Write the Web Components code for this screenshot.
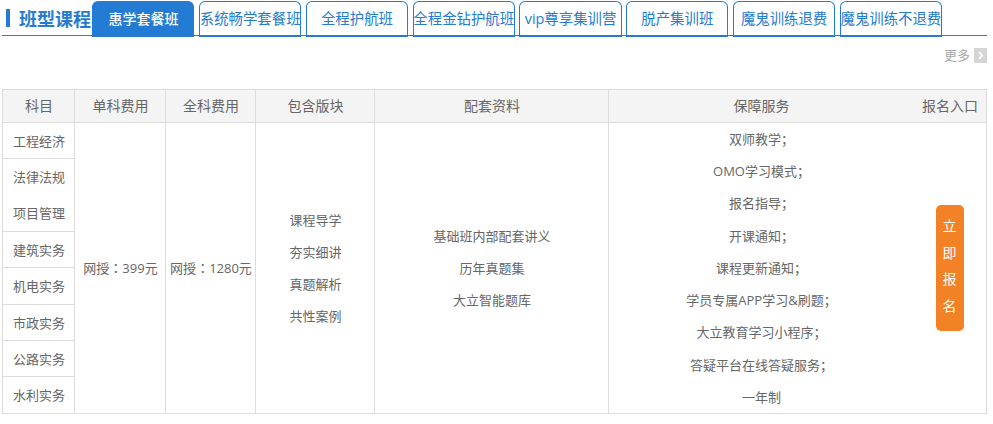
<!DOCTYPE html>
<html lang="zh">
<head>
<meta charset="utf-8">
<title>班型课程</title>
<style>
  html, body { margin: 0; background: #fff; }
  body { font-family: "Open Sans", "Noto Sans CJK SC", sans-serif; }
</style>
</head>
<body>
<course-panel></course-panel>
<script>
const FONT = '"Open Sans", "Noto Sans CJK SC", sans-serif';

class CourseTab extends HTMLElement {
  constructor() {
    super();
    this.attachShadow({ mode: 'open' }).innerHTML = `
      <style>
        :host {
          display: flex;
          align-items: center;
          justify-content: center;
          box-sizing: border-box;
          height: 36px;
          border: 1px solid #237bd3;
          border-bottom-width: 2px;
          border-radius: 6px 6px 0 0;
          background: #fff;
          color: #237bd3;
          font: 14.4px/20px ${FONT};
          white-space: nowrap;
        }
        :host([active]) {
          background: #237bd3;
          color: #fff;
          font-weight: 500;
          font-size: 14px;
        }
      </style>
      <slot></slot>`;
  }
}

class CourseHeader extends HTMLElement {
  constructor() {
    super();
    this.attachShadow({ mode: 'open' }).innerHTML = `
      <style>
        :host {
          display: flex;
          box-sizing: border-box;
          height: 35px;
          margin: 1px 6px 0 2px;
          border-bottom: 1px solid #237bd3;
          font-family: ${FONT};
        }
        .title {
          display: flex;
          align-items: center;
          gap: 9px;
          width: 90.3px;
          height: 34px;
          padding-left: 4px;
          box-sizing: border-box;
          color: #237bd3;
          font-size: 18px;
          font-weight: 700;
          white-space: nowrap;
        }
        .title i {
          flex: none;
          width: 4px;
          height: 18px;
          background: #237bd3;
        }
        .tabs {
          display: grid;
          grid-template-columns: repeat(8, 102.2px);
          column-gap: 4.6px;
          height: 36px;
        }
      </style>
      <div class="title"><i></i>班型课程</div>
      <div class="tabs"><slot></slot></div>`;
  }
}

class MoreLink extends HTMLElement {
  constructor() {
    super();
    this.attachShadow({ mode: 'open' }).innerHTML = `
      <style>
        :host {
          display: flex;
          justify-content: flex-end;
          align-items: center;
          gap: 4px;
          height: 16px;
          margin: 11px 6px 0 0;
          color: #a9a9a9;
          font: 13px/16px ${FONT};
        }
        svg { display: block; }
      </style>
      <span>更多</span>
      <svg width="13" height="15" viewBox="0 0 13 15">
        <rect width="13" height="15" rx="1" fill="#d5d5d5"/>
        <path d="M5 4l3.2 3.5L5 11" fill="none" stroke="#fff" stroke-width="1.8"/>
      </svg>`;
  }
}

class SignupButton extends HTMLElement {
  constructor() {
    super();
    this.attachShadow({ mode: 'open' }).innerHTML = `
      <style>
        :host {
          display: flex;
          flex-direction: column;
          align-items: center;
          justify-content: center;
          gap: 10.5px;
          box-sizing: border-box;
          width: 28px;
          height: 126px;
          padding-bottom: 4px;
          border-radius: 5px;
          background: #f28225;
          color: #fff;
          font: 14px/16px ${FONT};
          cursor: pointer;
        }
      </style>
      <span>立</span><span>即</span><span>报</span><span>名</span>`;
  }
}

class InfoList extends HTMLElement {
  constructor() {
    super();
    this.attachShadow({ mode: 'open' });
  }
  connectedCallback() {
    const rows = this.getAttribute('items').split('|');
    this.shadowRoot.innerHTML = `
      <style>
        :host {
          display: flex;
          flex-direction: column;
          align-items: center;
          justify-content: center;
          box-sizing: border-box;
          height: 100%;
          line-height: ${this.getAttribute('pitch') || 32}px;
          text-align: center;
        }
      </style>
      ${rows.map(r => `<div>${r}</div>`).join('')}`;
  }
}

class CourseTable extends HTMLElement {
  constructor() {
    super();
    const heads = ['科目', '单科费用', '全科费用', '包含版块', '配套资料', '保障服务', '报名入口'];
    const subjects = [['工程经济'], ['法律法规', '项目管理'], ['建筑实务'], ['机电实务'], ['市政实务'], ['公路实务'], ['水利实务']];
    this.attachShadow({ mode: 'open' }).innerHTML = `
      <style>
        :host {
          display: grid;
          grid-template-columns: 72px 91px 90px 119px 234px 304px 73px;
          grid-template-rows: 33px 290px;
          box-sizing: border-box;
          width: 985px;
          margin: 26px 0 0 2px;
          border: 1px solid #dcdcdc;
          color: #666;
          font: 13px/20px ${FONT};
        }
        .head {
          display: flex;
          align-items: center;
          justify-content: center;
          padding-left: 1px;
          background: #f4f4f4;
          border-right: 1px solid #dcdcdc;
          border-bottom: 1px solid #dcdcdc;
          font-size: 14px;
          white-space: nowrap;
        }
        .head.plain { border-right: 0; }
        .cell {
          display: flex;
          align-items: center;
          justify-content: center;
          padding-left: 1px;
          border-right: 1px solid #dcdcdc;
          white-space: nowrap;
          min-width: 0;
        }
        .cell.plain { border-right: 0; }
        .cell.sign { padding-left: 0; }
        .colon { font-family: "Noto Sans CJK JP", sans-serif; }
        .subjects {
          display: grid;
          grid-template-rows: 36px 73px 36px 37px 36px 36px 36px;
          border-right: 1px solid #dcdcdc;
        }
        .subject {
          display: flex;
          flex-direction: column;
          justify-content: space-around;
          align-items: center;
          padding-left: 1px;
          border-bottom: 1px solid #dcdcdc;
        }
        .subject:last-child { border-bottom: 0; }
        .subject span { display: block; line-height: 36px; }
      </style>
      ${heads.map((h, i) => `<div class="head${i >= 5 ? ' plain' : ''}">${h}</div>`).join('')}
      <div class="subjects">
        ${subjects.map(g => `<div class="subject">${g.map(s => `<span>${s}</span>`).join('')}</div>`).join('')}
      </div>
      <div class="cell">网授<span class="colon">：</span>399元</div>
      <div class="cell">网授<span class="colon">：</span>1280元</div>
      <div class="cell"><info-list items="课程导学|夯实细讲|真题解析|共性案例"></info-list></div>
      <div class="cell"><info-list items="基础班内部配套讲义|历年真题集|大立智能题库"></info-list></div>
      <div class="cell plain"><info-list pitch="32.2" items="双师教学；|OMO学习模式；|报名指导；|开课通知；|课程更新通知；|学员专属APP学习&amp;刷题；|大立教育学习小程序；|答疑平台在线答疑服务；|一年制"></info-list></div>
      <div class="cell plain sign"><signup-button></signup-button></div>`;
  }
}

class CoursePanel extends HTMLElement {
  constructor() {
    super();
    this.attachShadow({ mode: 'open' }).innerHTML = `
      <style>
        :host { display: block; width: 993px; height: 424px; overflow: hidden; }
      </style>
      <course-header>
        <course-tab active>惠学套餐班</course-tab>
        <course-tab>系统畅学套餐班</course-tab>
        <course-tab>全程护航班</course-tab>
        <course-tab>全程金钻护航班</course-tab>
        <course-tab>vip尊享集训营</course-tab>
        <course-tab>脱产集训班</course-tab>
        <course-tab>魔鬼训练退费</course-tab>
        <course-tab>魔鬼训练不退费</course-tab>
      </course-header>
      <more-link></more-link>
      <course-table></course-table>`;
  }
}

customElements.define('course-tab', CourseTab);
customElements.define('course-header', CourseHeader);
customElements.define('more-link', MoreLink);
customElements.define('signup-button', SignupButton);
customElements.define('info-list', InfoList);
customElements.define('course-table', CourseTable);
customElements.define('course-panel', CoursePanel);
</script>
</body>
</html>
